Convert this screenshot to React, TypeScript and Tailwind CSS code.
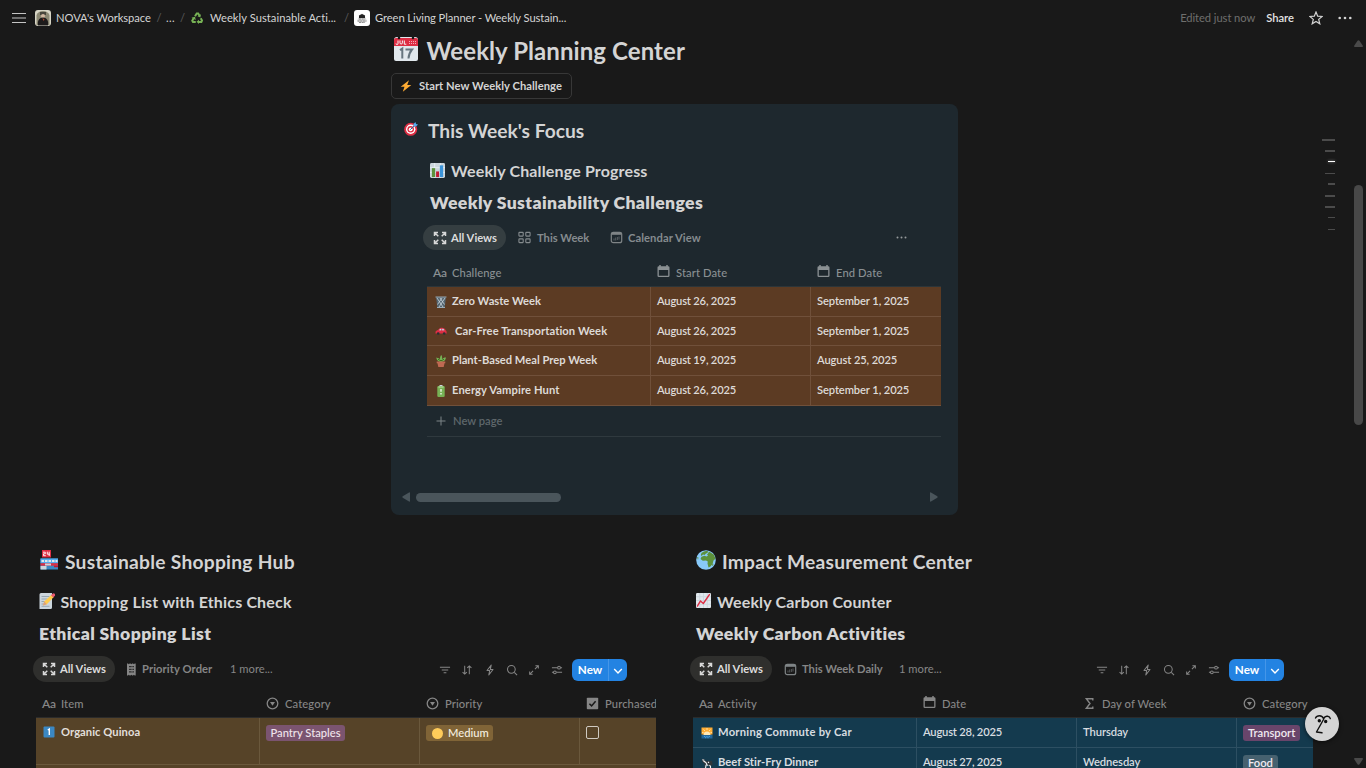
import type { ReactNode } from "react";

const F = "font-['Lato','Liberation_Sans',sans-serif]";

type IconProps = { className?: string; children?: ReactNode };

function Svg({ box = 16, className = "", children }: IconProps & { box?: number }) {
  return (
    <svg viewBox={`0 0 ${box} ${box}`} className={`shrink-0 ${className}`} fill="none">
      {children}
    </svg>
  );
}

/* ---------- emoji ---------- */

const Calendar17 = () => (
  <Svg box={24} className="h-[24px] w-[24px]">
    <path d="M0 3a3 3 0 0 1 3-3h18a3 3 0 0 1 3 3v19a2 2 0 0 1-2 2H2a2 2 0 0 1-2-2z" fill="#e1e8ed" />
    <path d="M0 9V3a2 2 0 0 1 2-2h20a2 2 0 0 1 2 2v6z" fill="#dd2e44" />
    <circle cx="5" cy="1" r="1.3" fill="#191919" />
    <circle cx="19" cy="1" r="1.3" fill="#191919" />
    <path d="M4 3.500v3a1 1 0 0 1-2 0M6 3.500v2.300a1.200 1.200 0 0 0 2.400 0V3.500M10.300 3.500v3.700h2" stroke="#f5f8fa" strokeWidth="1" />
    <path d="M15 4.500h7M15 6.500h7" stroke="#f4abba" strokeWidth="1" strokeDasharray="1 1" />
    <path d="M6 13.200l2.300-1.500V21.500M11.500 12.500h6.500c-2.400 2.800-3.300 5.500-3.500 9" stroke="#66757f" strokeWidth="2" />
  </Svg>
);

const Bolt = () => (
  <Svg box={12} className="h-[12px] w-[12px]">
    <path d="M9 .3.700 6.800h3.800L2.800 11.800l8.500-6.800H7.200z" fill="#ffac33" />
  </Svg>
);

const Target = () => (
  <Svg box={14} className="h-[14px] w-[14px]">
    <circle cx="6.700" cy="7.300" r="6.500" fill="#dd2e44" />
    <circle cx="6.700" cy="7.300" r="4.700" fill="#fff" />
    <circle cx="6.700" cy="7.300" r="3.300" fill="#dd2e44" />
    <circle cx="6.700" cy="7.300" r="1.900" fill="#fff" />
    <path d="m6.300 7.700 5-5" stroke="#226699" strokeWidth="1" />
    <path d="M9.500 4.500V2l2-2 .5 2 2 .5-2 2z" fill="#55acee" />
  </Svg>
);

const BarChart = () => (
  <Svg className="h-[15px] w-[15px]">
    <rect width="16" height="16" rx="1.500" fill="#ccd6dd" />
    <path d="M0 5h16M0 10h16M5 0v16M11 0v16" stroke="#e8eff3" />
    <path d="M2 5.500h3.500V15H2z" fill="#5c913b" />
    <path d="M6.500 9h3.200v6H6.500z" fill="#be1931" />
    <path d="M10.500 2.500H14V15h-3.500z" fill="#3b94d9" />
  </Svg>
);

const Trash = () => (
  <Svg box={12} className="h-[12px] w-[12px]">
    <path d="M1 1h10L9.700 11.500H2.300z" fill="#546570" />
    <path d="M.5 1h11M2 11.500h8" stroke="#99aab5" />
    <path d="m2 2 6 9M5 2l4.500 6.500M10 2l-6 9M7 2 2.500 8.500" stroke="#ccd6dd" strokeWidth=".8" />
  </Svg>
);

const Car = () => (
  <Svg box={12} className="h-[12px] w-[12px]">
    <path d="M.5 7.200c0-1.500 1.500-2.200 2.500-2.300C4.200 3.200 5 2.700 7 2.700c2.200 0 3 1.300 3.700 2.500.8.500 1 1.300 1 3.300H.5z" fill="#dd2e44" />
    <path d="M4 5.300C4.700 4 5.500 3.700 6.300 3.700v1.800zM7.200 3.700c1.300 0 1.900.700 2.300 1.600l-2.300.2z" fill="#bbddf5" />
    <circle cx="3.200" cy="8.500" r="1.300" fill="#292f33" />
    <circle cx="9.200" cy="8.500" r="1.300" fill="#292f33" />
  </Svg>
);

const Plant = () => (
  <Svg box={12} className="h-[12px] w-[12px]">
    <path d="M6 7C3 6.500 1.500 5 1.300 2.500 3.500 3 4.300 3.500 5 4.500 4.800 2.500 5.300 1 6.300 0c1 1.500 1 3 .7 4.300C8 2.800 9.300 2.300 11 2.400 10.700 5 9 6.700 6 7z" fill="#77b255" />
    <path d="M5 5.500h2M3 4.200l2 1.200M9 4.200l-2 1.200" stroke="#3e721d" />
    <path d="M1.700 6.500h8.600v1.800H9.500L8.700 12H3.300L2.500 8.300h-.8z" fill="#bf6952" />
  </Svg>
);

const Battery = () => (
  <Svg box={12} className="h-[12px] w-[12px]">
    <path d="M4.500 0h3v1.500h-3z" fill="#ccd6dd" />
    <rect x="2.300" y="1" width="7.400" height="11" rx="1.300" fill="#77b255" />
    <path d="M3.500 1.500h5v1h-5z" fill="#c6e5b3" />
    <path d="M6 4v2.800M6 8v1.500" stroke="#fff" strokeWidth="1.200" />
  </Svg>
);

const Store = () => (
  <Svg box={20} className="h-[20px] w-[20px]">
    <rect x="3" y="0" width="9" height="7.500" fill="#dd2e44" />
    <path d="M4 2.200h2.300v1.600H4.500v1.900h2.300M8.300 1.700v2.500h2.500M10.200 1.700V6" stroke="#fff" strokeWidth=".9" />
    <rect x="1.500" y="8.500" width="17.500" height="11" fill="#3b88c3" />
    <path d="M1.500 8.500h17.500v4.500H1.500z" fill="#55acee" />
    <path d="M2.500 11h16" stroke="#e1e8ed" strokeWidth="1.800" strokeDasharray="2.500 1" />
    <path d="M1.500 13.200h17.500v2.500H1.500z" fill="#dd2e44" />
    <path d="M6 13.500h6v2H6zM1.500 16h6v3.500h-6z" fill="#ccd6dd" />
    <path d="M15 15.700h4v1.500h-4z" fill="#be1931" />
  </Svg>
);

const Memo = () => (
  <Svg className="h-[16px] w-[16px]">
    <path d="M.5 1.500A1.500 1.500 0 0 1 2 0h11v14.500a1.500 1.500 0 0 1-1.500 1.500h-11z" fill="#ccd6dd" />
    <path d="M2.500 3.500h8M2.500 6h6M2.500 8.500h4M2.500 11h3M2.500 13.300h8" stroke="#8899a6" strokeWidth=".8" />
    <path d="m4 12.500 1.200-4L12.500 1.800l2.300 2.300-7 7.200z" fill="#ffcc4d" />
    <path d="m4 12.500 1.200-4 2.600 2.800z" fill="#d99e82" />
    <path d="m12 2.300 1.500-1.500a1.500 1.500 0 0 1 2.200 2.200l-1.500 1.600z" fill="#ea596e" />
  </Svg>
);

const Globe = () => (
  <Svg box={20} className="h-[20px] w-[20px]">
    <circle cx="10" cy="10" r="9.800" fill="#88c9f9" />
    <path d="M7 2C9 .8 11 1 12 1.300l-.5 1.700L10 3.500 8.500 5 7 4.500 5.500 6 4.800 5 5.500 3zM13 1.500l5 3.300 1.400 4-1.900 1.700-1 3.500-2 2.500-2 1-1-4 .3-2-1.800-1-3.200.2L4.500 9 5.500 6.700l3-1 2 .8 1.500-.7-1-1.300 1-1z" fill="#5c913b" />
    <path d="m1 7 1.500.5L2 10zM16.500 13.500l1 .5-.7 1.800-.8-.3z" fill="#5c913b" />
  </Svg>
);

const LineChart = () => (
  <Svg className="h-[15px] w-[15px]">
    <rect width="16" height="16" rx="1.200" fill="#e1e8ed" />
    <path d="M0 4h16M0 8h16M0 12h16M4 0v16M8 0v16M12 0v16" stroke="#ccd6dd" />
    <path d="m1.500 14 3.300-5.500 3 2.700 6.500-9.500" stroke="#dd2e44" strokeWidth="1.500" strokeLinecap="round" strokeLinejoin="round" />
  </Svg>
);

const OneKey = () => (
  <Svg box={12} className="h-[12px] w-[12px]">
    <rect x=".5" y=".5" width="11" height="11" rx="1" fill="#3b88c3" />
    <path d="M4.800 4 6.300 3v6" stroke="#fff" strokeWidth="1.400" />
  </Svg>
);

const Sunrise = () => (
  <Svg box={12} className="h-[12px] w-[12px]">
    <path d="M.5.500h11v7H.5z" fill="#ffac33" />
    <path d="M.5 8h11v3.500H.5z" fill="#226699" />
    <path d="M2.500 8a3.500 3.500 0 0 1 7 0z" fill="#ffe8b6" />
    <path d="M6 1v2M2.500 2.500 4 4M9.500 2.500 8 4M1 5.500h1.500M9.500 5.500H11" stroke="#ffe8b6" strokeWidth=".8" />
    <path d="M3 9.500h6M4 10.700h4" stroke="#55acee" strokeWidth=".8" strokeDasharray="1 .7" />
  </Svg>
);

const Cow = () => (
  <Svg box={12} className="h-[12px] w-[12px]">
    <path d="M1 2.500 3 2l1.500 2H11L11.700 8l-1 .5L10 8l-.5 3.500h-1L8 8.500l-3-.5-.5 3.500h-1L3.500 7 1.200 5z" fill="#30363b" />
    <path d="m1.300 2.800 2 .4M2.500 4l2.300 1.500L6 7.500 5 8.300l-.5 3.200M7 5l1 .8M8.500 8l1 1.500v2M6.300 8.200l1 .3" stroke="#f0f4f6" strokeWidth="1.100" />
  </Svg>
);

const Recycle = () => (
  <Svg box={24} className="h-[12px] w-[12px]">
    <path d="M8 8.500 11.500 3h2.800l2.700 4.500" stroke="#77b255" strokeWidth="4" />
    <path d="m19.800 4.500-1 6.500-5.800-2.500z" fill="#77b255" />
    <path d="M19.500 12.500 22 17l-1.300 3H15" stroke="#77b255" strokeWidth="4" />
    <path d="M16 15.500V24l-5-4.300z" fill="#77b255" />
    <path d="M9.500 20H4L2.500 17.500 5.500 12" stroke="#77b255" strokeWidth="4" />
    <path d="m1 11.500 7-2L9.500 16z" fill="#77b255" />
  </Svg>
);

/* ---------- interface icons ---------- */

const ExpandAll = () => (
  <Svg box={14} className="h-[14px] w-[14px]">
    <g stroke="#d8d8d8" strokeWidth="1.500">
      <path d="M1.500 5V1.500H5M1.700 1.700l3.600 3.600M9 1.500h3.500V5M12.300 1.700 8.700 5.300M12.500 9v3.500H9M12.300 12.300 8.700 8.700M5 12.500H1.500V9M1.700 12.300l3.600-3.600" />
    </g>
  </Svg>
);

const Gallery = () => (
  <Svg box={14} className="h-[13px] w-[13px] text-[#848a8d]">
    <g stroke="currentColor" strokeWidth="1.200">
      <rect x="1" y="1.500" width="4.600" height="4" rx=".6" />
      <rect x="8.400" y="1.500" width="4.600" height="4" rx=".6" />
      <rect x="1" y="8.500" width="4.600" height="4" rx=".6" />
      <rect x="8.400" y="8.500" width="4.600" height="4" rx=".6" />
    </g>
  </Svg>
);

const CalendarView = () => (
  <Svg box={13} className="h-[13px] w-[13px] text-[#7f8486]">
    <rect x="1.300" y="1.300" width="10.400" height="10.400" rx="2" stroke="currentColor" strokeWidth="1.200" />
    <path d="M1.500 1.500h10v2.300h-10z" fill="currentColor" />
    <path d="M4 9.500v-2M5.700 9.500v-3M7.400 9v-3M9 8.500v-3" stroke="currentColor" strokeWidth="1" opacity=".6" />
  </Svg>
);

const Receipt = () => (
  <Svg box={13} className="h-[13px] w-[13px] text-[#858585]">
    <path d="M2 .5h1l.8.8.9-.8h.8l.8.800.900-.800h.800l.900.800.800-.800h1v12h-1l-.800-.800-.900.800h-.800l-.900-.800-.800.800h-.800l-.900-.800-.800.800H2z" fill="currentColor" />
    <path d="M4 3.700h5M4 6.300h5M4 8.900h5" stroke="#191919" />
    <path d="M7 3.200v6.300" stroke="currentColor" strokeWidth=".7" />
  </Svg>
);

const DateIcon = () => (
  <Svg box={13} className="mb-[2px] h-[13px] w-[13px]">
    <path d="M3 0v2.500M10 0v2.500" stroke="currentColor" strokeWidth="1.500" />
    <path d="M.5 2.500A1.300 1.300 0 0 1 1.800 1.200h9.400a1.300 1.300 0 0 1 1.300 1.300v8.300a1.300 1.300 0 0 1-1.300 1.300H1.800a1.300 1.300 0 0 1-1.300-1.300zM1.800 5v5.800h9.400V5z" fill="currentColor" fillRule="evenodd" />
  </Svg>
);

const SelectIcon = () => (
  <Svg box={13} className="h-[13px] w-[13px]">
    <circle cx="6.500" cy="6.500" r="5.300" stroke="currentColor" strokeWidth="1.300" />
    <path d="M4 5h5L6.500 8.800z" fill="currentColor" />
  </Svg>
);

const SumIcon = () => (
  <Svg box={13} className="h-[13px] w-[13px]">
    <path d="M9.800 3.500V1.700H3.300l3.700 4.800-3.700 4.800h6.500V9.500" stroke="currentColor" strokeWidth="1.400" />
  </Svg>
);

const CheckIcon = () => (
  <Svg box={13} className="h-[13px] w-[13px]">
    <rect x=".8" y=".8" width="11.400" height="11.400" rx=".8" fill="currentColor" />
    <path d="m3.400 6.700 2.200 2.200 4-4.700" stroke="#191919" strokeWidth="1.500" />
  </Svg>
);

const TextIcon = () => <span className="-mr-px w-[14px] text-[12px] leading-[13px] tracking-[-0.2px] font-semibold">Aa</span>;

/* ---------- shared pieces ---------- */

function Tab({ icon, label, active, card, className = "" }: { icon: ReactNode; label: string; active?: boolean; card?: boolean; className?: string }) {
  const tone = active ? `rounded-full text-[#dcdcdc] ${card ? "bg-[#353e41]" : "bg-[#2f2f2d]"}` : card ? "text-[#858b8e]" : "text-[#858585]";
  return (
    <div className={`flex h-full items-center whitespace-nowrap font-bold ${tone} ${className}`}>
      {icon}
      <span className="pt-px">{label}</span>
    </div>
  );
}

const tools: ReactNode[] = [
  <path key="f" d="M1 3.500h11M3 6.500h7M5 9.500h3" />,
  <path key="s" d="M4 2v9M1.700 8.700 4 11l2.300-2.300M9 11V2M6.700 4.300 9 2l2.300 2.300" />,
  <path key="b" d="M7.800 1.200 3.200 7h3l-1 4.800L9.800 6h-3z" strokeLinejoin="round" />,
  <g key="q"><circle cx="5.800" cy="5.800" r="4.200" /><path d="m9 9 3 3" /></g>,
  <path key="e" d="M8 1.800h3.200V5M11 2 7.500 5.500M5 11.200H1.800V8M2 11l3.500-3.500" />,
  <g key="c"><path d="M1 4h6M10.500 4H12M1 9h1.500M6 9h6" /><circle cx="8.700" cy="4" r="1.500" /><circle cx="4.200" cy="9" r="1.500" /></g>,
];

function Toolbar() {
  return (
    <div className="ml-auto flex h-full items-center text-[#868686]">
      {tools.map((t, i) => (
        <span key={i} className="flex w-[22.4px] justify-center pt-px">
          <svg viewBox="0 0 13 13" className="h-[12px] w-[12px]" fill="none" stroke="currentColor" strokeWidth="1.100">{t}</svg>
        </span>
      ))}
      <div className="ml-[4px] mt-px flex h-[22px] w-[55px] overflow-hidden rounded-[6px] bg-[#2383e2] font-bold text-white">
        <span className="flex w-[37px] items-center justify-center border-r border-[#4596e8] text-[11.7px]">New</span>
        <span className="flex grow items-center justify-center">
          <svg viewBox="0 0 10 10" className="mt-[2px] h-[10px] w-[10px]" fill="none" stroke="white" strokeWidth="1.400"><path d="m1.200 3 3.800 4 3.800-4" /></svg>
        </span>
      </div>
    </div>
  );
}

type Col = { icon: ReactNode; label: string };
const colWidths = ["w-[224px]", "w-[160px]", "w-[160px]", "w-[160px]"];

function HeaderRow({ cols, card }: { cols: Col[]; card?: boolean }) {
  return (
    <div className={`flex h-[28px] overflow-hidden border-b font-medium ${card ? "border-[#2c3539] text-[#8a9093]" : "border-[#2b2b2b] text-[#868686]"}`}>
      {cols.map((c, i) => (
        <div key={c.label} className={`flex shrink-0 items-center gap-[6px] whitespace-nowrap pl-[6px] ${colWidths[i]}`}>
          {c.icon}
          <span className="pt-[2px] tracking-[0.100px]">{c.label}</span>
        </div>
      ))}
    </div>
  );
}

function Section({ emoji, title, titleClass, subEmoji, sub, subClass, db, dbClass, tab2, children }: {
  emoji: ReactNode; title: string; titleClass: string; subEmoji: ReactNode; sub: string; subClass: string; db: string; dbClass: string; tab2: ReactNode; children: ReactNode;
}) {
  return (
    <section className="w-[620px] shrink-0">
      <h2 className={`flex h-[28px] items-center whitespace-nowrap pl-[3px] text-[19.2px] font-bold ${titleClass}`}>{emoji}<span className="pt-px">{title}</span></h2>
      <h3 className={`mt-[14px] flex h-[24px] items-center whitespace-nowrap pl-[3px] text-[16px] font-bold ${subClass}`}>{subEmoji}{sub}</h3>
      <h4 className={`mt-[8px] flex h-[24px] items-center whitespace-nowrap pl-[3px] text-[17.6px] font-extrabold ${dbClass}`}>{db}</h4>
      <div className="-ml-[3px] mr-[29px] mt-[10px] flex h-[26px] items-center">
        <Tab active icon={<ExpandAll />} label="All Views" className="w-[82px] gap-[4px] pl-[9px]" />
        {tab2}
        <Toolbar />
      </div>
      <div className="mt-[8px] overflow-hidden">{children}</div>
    </section>
  );
}

const challenges = [
  { icon: <Trash />, name: "Zero Waste Week", start: "August 26, 2025", end: "September 1, 2025", h: "h-[30px]", pad: "" },
  { icon: <Car />, name: "Car-Free Transportation Week", start: "August 26, 2025", end: "September 1, 2025", h: "h-[29px]", pad: "ml-[3px] pt-px tracking-[0.070px]" },
  { icon: <Plant />, name: "Plant-Based Meal Prep Week", start: "August 19, 2025", end: "August 25, 2025", h: "h-[30px]", pad: "" },
  { icon: <Battery />, name: "Energy Vampire Hunt", start: "August 26, 2025", end: "September 1, 2025", h: "h-[30px]", pad: "tracking-[0.100px]" },
];

const activities = [
  { icon: <Sunrise />, name: "Morning Commute by Car", track: "tracking-[0.250px]", date: "August 28, 2025", day: "Thursday", tag: "Transport", tagClass: "bg-[#69456b]" },
  { icon: <Cow />, name: "Beef Stir-Fry Dinner", track: "tracking-[0.050px]", date: "August 27, 2025", day: "Wednesday", tag: "Food", tagClass: "bg-[#46616f]" },
];

const ticks = [
  "w-[13px] h-[2px] bg-[#4b4b4b]", "w-[10px] h-[2px] bg-[#4b4b4b]", "w-[7px] h-[1px] bg-white shadow-[0_0_3px_#ffffffa0]",
  "w-[10px] h-[1px] bg-[#4b4b4b]", "w-[7px] h-[2px] bg-[#4b4b4b]", "w-[10px] h-[2px] bg-[#4b4b4b]",
  "w-[10px] h-[2px] bg-[#4b4b4b]", "w-[7px] h-[1px] bg-[#4b4b4b]", "w-[7px] h-[1px] bg-[#4b4b4b]",
];

const Slash = ({ className }: { className: string }) => (
  <span className={`flex shrink-0 justify-center font-normal text-[#5c5c5c] ${className}`}>/</span>
);

function TopBar() {
  return (
    <header className="flex h-[36px] shrink-0 items-center whitespace-nowrap pl-[12px] text-[#d4d4d4]">
      <svg viewBox="0 0 14 12" className="h-[12px] w-[14px]" stroke="#c4c4c4" strokeWidth="1.200"><path d="M0 1.500h14M0 6h14M0 10.500h14" /></svg>
      <svg viewBox="0 0 16 16" className="ml-[9px] mr-[5px] h-[16px] w-[16px]">
        <rect width="16" height="16" rx="3" fill="#d8d6c6" />
        <path d="M1.500 15V5q2-4 6.500-4t6.500 4v10z" fill="#8b8873" />
        <path d="M5 2h6v3H5z" fill="#47463c" />
        <circle cx="8" cy="6" r="2" fill="#d2b9a2" />
        <path d="M3 15.500c-1-5 1.500-8 5-8s6 3 5 8z" fill="#1d1b1b" />
        <path d="m7.500 8 1 3 1-1.500z" fill="#b64a32" />
      </svg>
      <span className="w-[98px] tracking-[-0.060px]">NOVA's Workspace</span>
      <Slash className="w-[10px]" />
      <span className="ml-[2px] w-[12px] tracking-[0.300px]">...</span>
      <Slash className="w-[9px]" />
      <span className="ml-[4px] w-[19px]"><Recycle /></span>
      <span className="w-[132px] tracking-[0.030px]">Weekly Sustainable Acti...</span>
      <Slash className="w-[9px]" />
      <svg viewBox="0 0 16 16" className="ml-[3px] mr-[5px] h-[16px] w-[16px]">
        <rect width="16" height="16" rx="3" fill="#fff" />
        <path d="M3.500 11.500C3 9 4.500 8 5 7L4.700 5.500 8 3.500l3.300 2L11 7c.5 1 2 2 1.500 4.500L11 12.500H5z" fill="#d5d5d5" />
        <path d="M5 5.500 8 4l3 1.500V8H5z" fill="#222" />
        <path d="M3.500 11h9M5 9h6M5 12.500h6" stroke="#777" strokeWidth=".8" strokeDasharray="2 .7" />
      </svg>
      <span className="tracking-[-0.080px]">Green Living Planner - Weekly Sustain...</span>
      <span className="ml-auto tracking-[-0.070px] text-[#6f6f6d]">Edited just now</span>
      <span className="ml-[11px] font-semibold text-[#e4e4e4]">Share</span>
      <svg viewBox="0 0 14 14" className="ml-[15px] h-[14px] w-[14px]" fill="none" stroke="#d4d4d4" strokeWidth="1.200"><path d="m7 1 1.700 4.200 4.500.3-3.500 2.900 1.100 4.400L7 10.400l-3.800 2.400 1.100-4.400L.8 5.500l4.500-.3z" /></svg>
      <svg viewBox="0 0 14 4" className="ml-[15px] mr-[14px] h-[4px] w-[14px]" fill="#d4d4d4"><circle cx="1.700" cy="2" r="1.300" /><circle cx="7" cy="2" r="1.300" /><circle cx="12.300" cy="2" r="1.300" /></svg>
    </header>
  );
}

function FocusCard() {
  return (
    <div className="mt-[5px] flex h-[411px] w-[567px] flex-col rounded-[8px] bg-[#1e282e] pt-[13px]">
      <h2 className="flex h-[28px] items-center pl-[13px] text-[19.2px] font-bold">
        <span className="mb-[4px] w-[24px]"><Target /></span>This Week's Focus
      </h2>
      <h3 className="mt-[14px] flex h-[24px] items-center pl-[39px] text-[16px] font-bold tracking-[0.150px]">
        <span className="mb-[2px] w-[21px]"><BarChart /></span>Weekly Challenge Progress
      </h3>
      <h4 className="mt-[8px] flex h-[24px] items-center pl-[39px] text-[17.600px] font-extrabold tracking-[0.380px]">Weekly Sustainability Challenges</h4>
      <div className="mt-[10px] flex h-[25px] items-center pl-[32px]">
        <Tab card active icon={<ExpandAll />} label="All Views" className="w-[83px] gap-[4px] pl-[10px]" />
        <Tab card icon={<Gallery />} label="This Week" className="ml-[12px] w-[92px] gap-[6px]" />
        <Tab card icon={<CalendarView />} label="Calendar View" className="gap-[5px] tracking-[0.070px]" />
        <svg viewBox="0 0 11 3" className="ml-auto mr-[51px] h-[3px] w-[11px]" fill="#959a9c"><circle cx="1.500" cy="1.500" r="1" /><circle cx="5.500" cy="1.500" r="1" /><circle cx="9.500" cy="1.500" r="1" /></svg>
      </div>
      <div className="ml-[36px] mt-[9px] w-[514px] overflow-hidden">
        <HeaderRow card cols={[{ icon: <TextIcon />, label: "Challenge" }, { icon: <DateIcon />, label: "Start Date" }, { icon: <DateIcon />, label: "End Date" }]} />
        {challenges.map((c) => (
          <div key={c.name} className={`flex border-b border-[#70503a] bg-[#5c3b23] font-semibold text-[#dedad7] ${c.h}`}>
            <div className="flex w-[224px] items-center gap-[5px] border-r border-[#70503a] pl-[8px] font-bold">{c.icon}<span className={c.pad}>{c.name}</span></div>
            <div className="flex w-[160px] items-center border-r border-[#70503a] pl-[6px] tracking-[-0.200px]">{c.start}</div>
            <div className="flex items-center pl-[6px] tracking-[-0.120px]">{c.end}</div>
          </div>
        ))}
        <div className="flex h-[31px] items-center gap-[7px] border-b border-[#2f393e] pl-[9px] font-semibold text-[#5e676b]">
          <svg viewBox="0 0 10 10" className="h-[10px] w-[10px]" stroke="#7d8487"><path d="M5 .5v9M.5 5h9" /></svg><span className="pt-px">New page</span>
        </div>
      </div>
      <div className="mb-[13px] ml-[11px] mr-[20px] mt-auto flex items-center">
        <svg viewBox="0 0 8 10" className="h-[10px] w-[8px]" fill="#4a555b"><path d="M8 1v8q0 1-1 .5L.7 5.800q-.7-.8 0-1.600L7 .5q1-.5 1 .5z" /></svg>
        <span className="ml-[6px] h-[9px] w-[145px] rounded-full bg-[#4a555b]" />
        <svg viewBox="0 0 8 10" className="ml-auto h-[10px] w-[8px]" fill="#4a555b"><path d="M0 1v8q0 1 1 .5l6.300-3.700q.7-.8 0-1.600L1 .5Q0 0 0 1z" /></svg>
      </div>
    </div>
  );
}

export default function App() {
  return (
    <div className={`relative flex h-[768px] w-[1366px] flex-col overflow-hidden bg-[#191919] text-[11.2px] text-[#d4d4d4] ${F}`}>
      <TopBar />
      <main>
        <div className="ml-[391px]">
          <h1 className="flex h-[30px] items-center pl-[3px] text-[24px] font-bold tracking-[0.080px]">
            <span className="mb-[4px] w-[32.500px]"><Calendar17 /></span>Weekly Planning Center
          </h1>
          <div className="mt-[7px] flex h-[26px] w-[181px] items-center gap-[6px] rounded-[5px] border border-[#373737] pl-[8px] font-bold tracking-[0.050px]">
            <Bolt /><span className="ml-px pt-px">Start New Weekly Challenge</span>
          </div>
          <FocusCard />
        </div>
        <div className="ml-[36px] mt-[33px] flex gap-[37px]">
          <Section
            emoji={<span className="mb-[4px] w-[26px]"><Store /></span>}
            title="Sustainable Shopping Hub"
            titleClass="tracking-[0.270px]"
            subEmoji={<span className="mb-[3px] w-[21.500px]"><Memo /></span>}
            sub="Shopping List with Ethics Check"
            subClass="tracking-[0.160px]"
            db="Ethical Shopping List"
            dbClass="tracking-[0.380px]"
            tab2={<><Tab icon={<Receipt />} label="Priority Order" className="ml-[10px] w-[105px] gap-[4px] tracking-[0.080px]" /><span className="text-[#868686]">1 more...</span></>}
          >
            <HeaderRow cols={[{ icon: <TextIcon />, label: "Item" }, { icon: <SelectIcon />, label: "Category" }, { icon: <SelectIcon />, label: "Priority" }, { icon: <CheckIcon />, label: "Purchased" }]} />
            <div className="flex h-[47px] border-b border-[#6a583c] bg-[#564328] text-[#e2dfda]">
              <div className="flex w-[224px] gap-[6px] border-r border-[#6a583c] pl-[7px] pt-[8px] font-bold"><OneKey /><span className="-mt-[2px] tracking-[0.050px]">Organic Quinoa</span></div>
              <div className="w-[160px] border-r border-[#6a583c] pl-[6px] pt-[7px]"><span className="flex h-[16px] w-[79px] items-center justify-center rounded-[3px] bg-[#7b5470] pt-px font-medium text-[#f0e4ec]">Pantry Staples</span></div>
              <div className="w-[160px] border-r border-[#6a583c] pl-[6px] pt-[7px]"><span className="flex h-[16px] w-[67px] items-center gap-[5px] rounded-[3px] bg-[#806437] pl-[6px] font-medium text-[#f5efe0]"><i className="h-[11px] w-[11px] rounded-full bg-[#ffcc5a]" /><span className="pt-px">Medium</span></span></div>
              <div className="pl-[6px] pt-[8px]"><span className="block h-[13px] w-[13px] rounded-[2px] border border-[#cfcac2]" /></div>
            </div>
            <div className="h-[30px] bg-[#564328]" />
          </Section>
          <Section
            emoji={<span className="mb-[4px] w-[26px]"><Globe /></span>}
            title="Impact Measurement Center"
            titleClass="tracking-[0.240px]"
            subEmoji={<span className="mb-[3px] w-[21px]"><LineChart /></span>}
            sub="Weekly Carbon Counter"
            subClass="tracking-[0.160px]"
            db="Weekly Carbon Activities"
            dbClass="tracking-[0.380px]"
            tab2={<><Tab icon={<CalendarView />} label="This Week Daily" className="ml-[12px] w-[115px] gap-[5px]" /><span className="text-[#868686]">1 more...</span></>}
          >
            <HeaderRow cols={[{ icon: <TextIcon />, label: "Activity" }, { icon: <DateIcon />, label: "Date" }, { icon: <SumIcon />, label: "Day of Week" }, { icon: <SelectIcon />, label: "Category" }]} />
            {activities.map((a) => (
              <div key={a.name} className="flex h-[30px] border-b border-[#2d4f62] bg-[#143a4e] font-semibold text-[#d8dde0]">
                <div className={`flex w-[224px] items-center gap-[5px] border-r border-[#2d4f62] pl-[8px] font-bold ${a.track}`}>{a.icon}{a.name}</div>
                <div className="flex w-[160px] items-center border-r border-[#2d4f62] pl-[6px] tracking-[-0.200px]">{a.date}</div>
                <div className="flex w-[160px] items-center border-r border-[#2d4f62] pl-[6px] tracking-[-0.080px]">{a.day}</div>
                <div className="flex items-center pl-[6px] pt-[1px]"><span className={`flex h-[16px] items-center rounded-[3px] px-[5px] pt-px text-[#f0eaf0] ${a.tagClass}`}>{a.tag}</span></div>
              </div>
            ))}
          </Section>
        </div>
      </main>

      <div className="absolute right-[31px] top-[134px] flex flex-col items-end">
        {ticks.map((t, i) => (
          <span key={i} className="flex h-[11.200px] items-center"><i className={t} /></span>
        ))}
      </div>
      <div className="absolute right-[3px] top-[40px] flex h-[725px] w-[9px] flex-col items-center">
        <svg viewBox="0 0 9 7" className="h-[7px] w-[9px]" fill="#4a4a4a"><path d="M0 6q0 1 1 1h7q1 0 1-1L5.500.700q-1-1.100-2 0z" /></svg>
        <span className="mt-[138px] h-[240px] w-[9px] rounded-full bg-[#484848]" />
        <svg viewBox="0 0 9 7" className="mt-auto h-[7px] w-[9px]" fill="#4a4a4a"><path d="M0 1q0-1 1-1h7q1 0 1 1L5.500 6.300q-1 1.100-2 0z" /></svg>
      </div>
      <div className="absolute left-[1305px] top-[707px] flex h-[34px] w-[34px] items-center justify-center rounded-full bg-[#d4d4d4] shadow-[0_1px_4px_#0009]">
        <svg viewBox="0 0 34 34" className="h-[34px] w-[34px]" fill="none" stroke="#111" strokeWidth="1.400" strokeLinecap="round" strokeLinejoin="round">
          <path d="M10.500 11q1-2.300 4-2.300 3 0 4.300 3.300L11.500 25l5.500.8M18.800 11.500q1-2.700 3.800-2.200 2.300.4 2.700 2.300" />
          <circle cx="14.300" cy="13.700" r="1" fill="#111" />
          <circle cx="20.700" cy="14.500" r="1" fill="#111" />
        </svg>
      </div>
    </div>
  );
}
